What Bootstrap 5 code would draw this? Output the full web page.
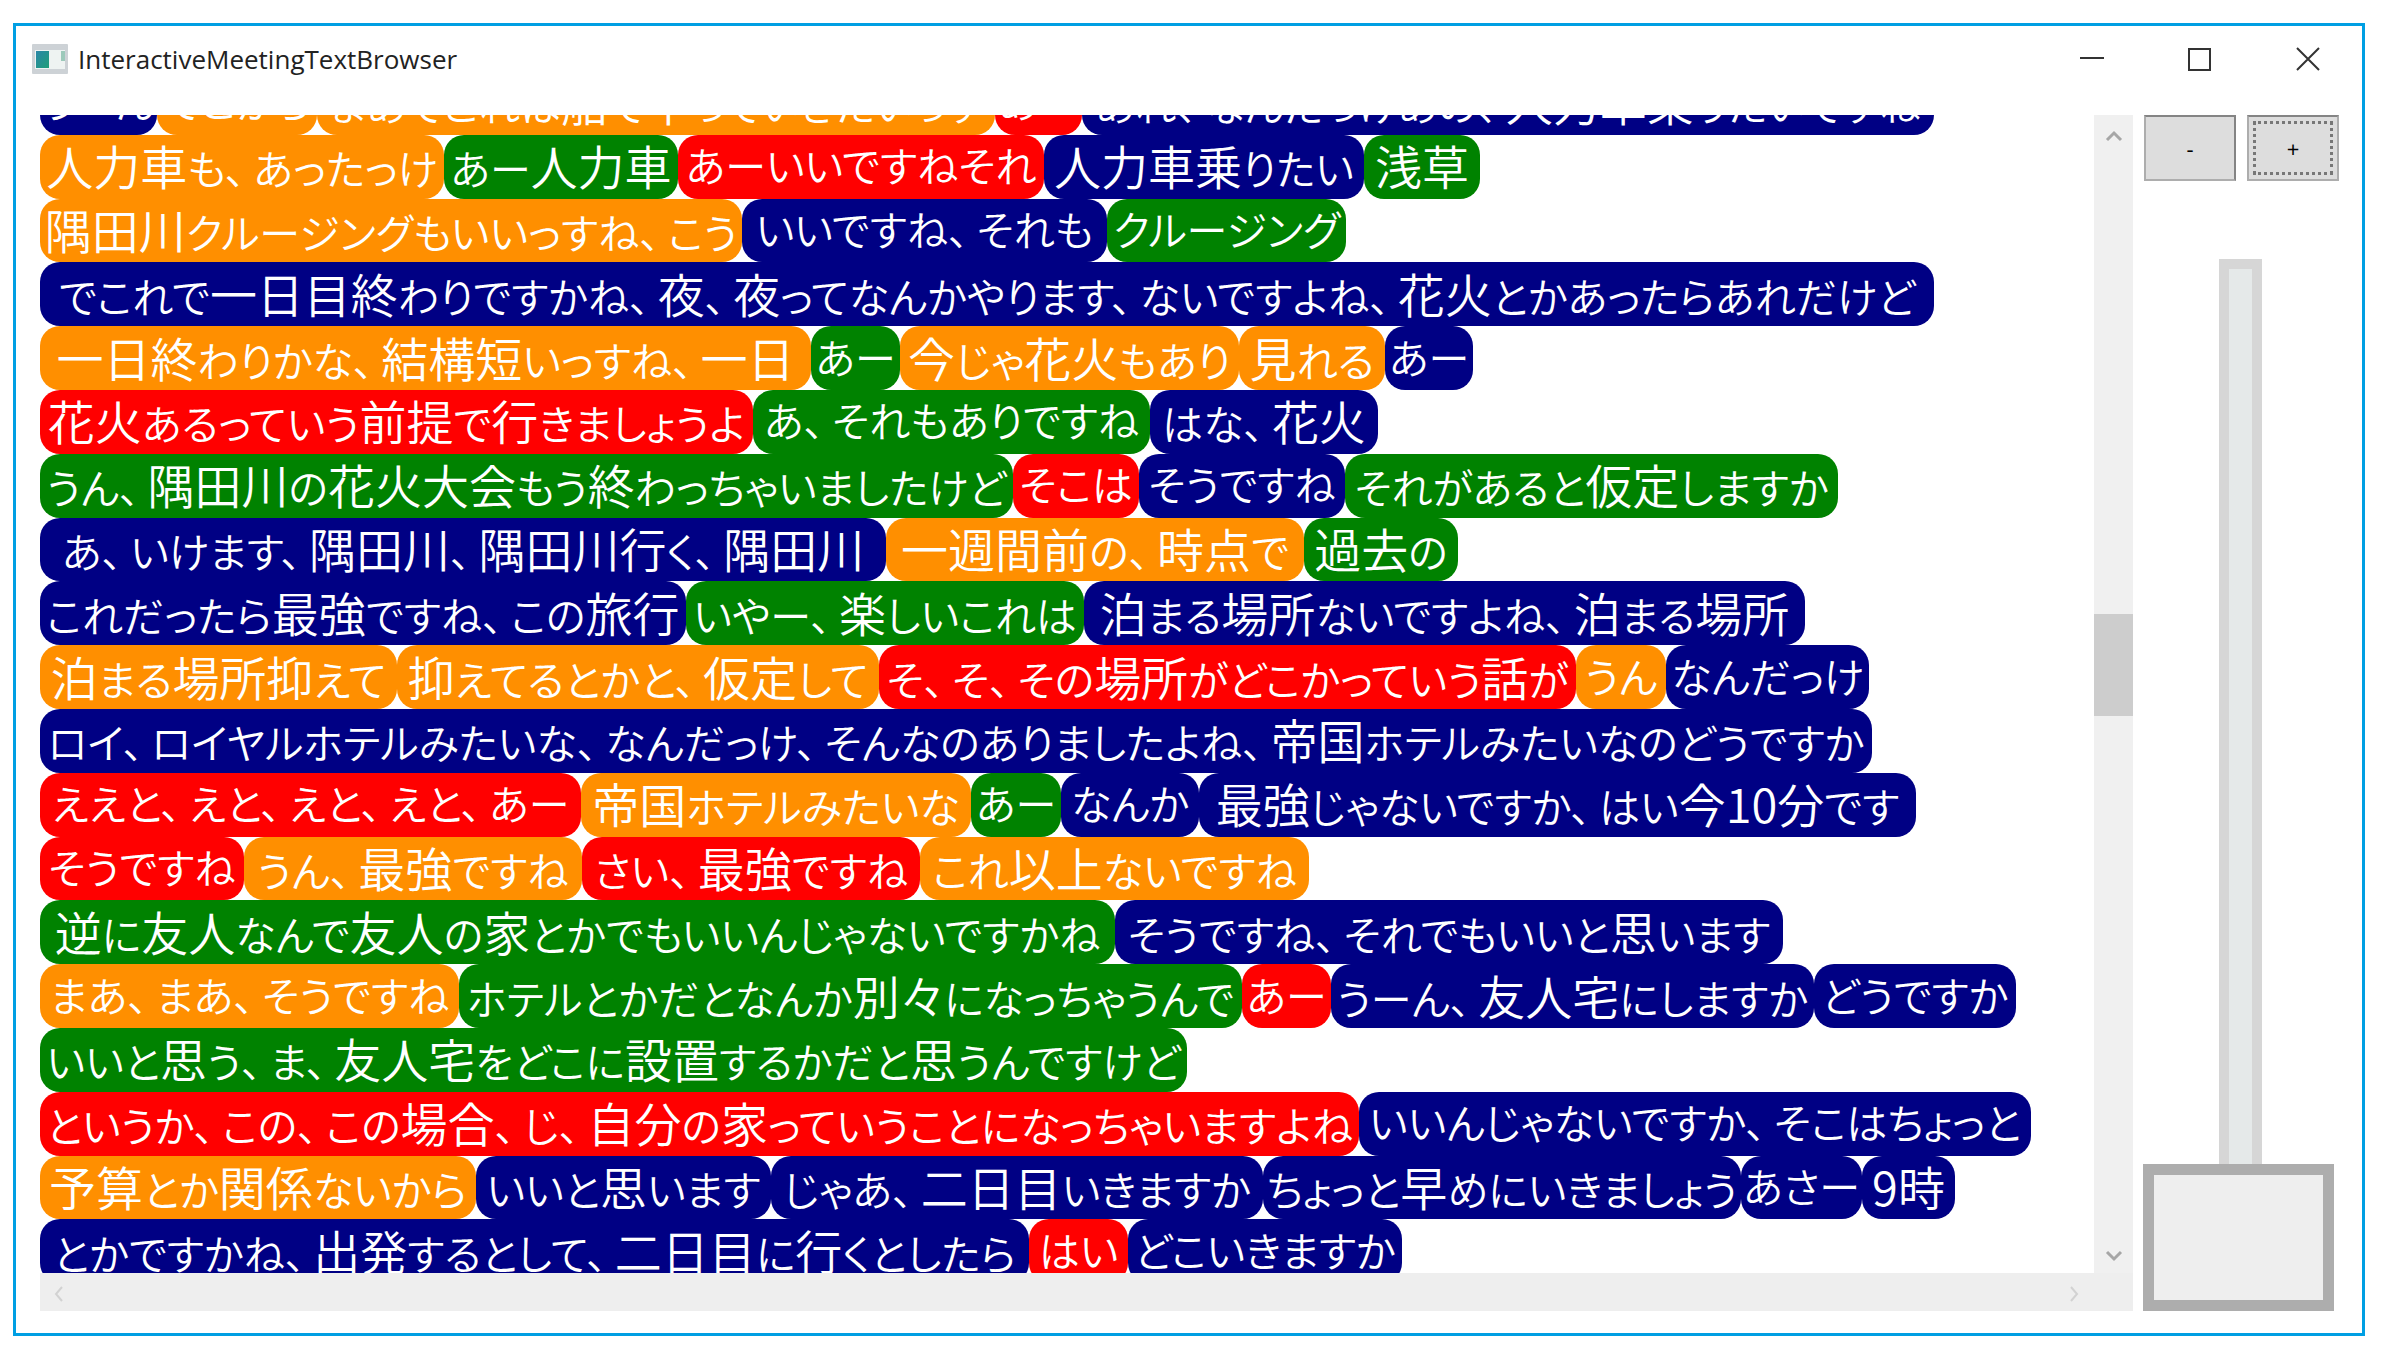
<!DOCTYPE html>
<html lang="ja">
<head>
<meta charset="utf-8">
<meta name="viewport" content="width=device-width, initial-scale=1">
<title>InteractiveMeetingTextBrowser</title>
<link href="https://cdn.jsdelivr.net/npm/bootstrap@5.3.0/dist/css/bootstrap.min.css" rel="stylesheet">
<style>
  body { background: #fff; font-family: "Open Sans", "Noto Sans CJK JP", sans-serif; }
  .app-page { padding: 23px 27px 24px 13px; }
  .app-window { border: 3px solid #009fe3; }
  .title-bar { height: 65px; padding-left: 16px; color: #222; }
  .app-name { font-size: 26px; line-height: 32px; font-weight: 400; margin: 0 0 0 10px; }
  .win-btn { width: 108px; border: 0; background: none; padding: 0; color: #333; }
  .app-main { padding: 24px 23px 22px 24px; gap: 11px; }

  /* transcript */
  .transcript { margin: -44px 0 -10px; }
  .talk-line { flex: 1 1 0; min-height: 0; }
  .talk { border-radius: 20px; color: #fff; white-space: nowrap; line-height: 1; padding-bottom: 4px;
    font-family: "Noto Sans CJK JP", sans-serif; font-size: 41px; font-weight: 350;
    font-feature-settings: "palt"; }
  .talk b { font-size: 47px; font-weight: 350; }
  .talk i { font-style: normal; margin-right: 8px; }
  .talk-a { background: #ff8f00; }
  .talk-b { background: #000084; }
  .talk-c { background: #008200; }
  .talk-d { background: #ff0000; }

  /* scroll bars */
  .bar-v { width: 39px; background: #f0f0f0; }
  .bar-h { height: 38px; background: #eee; padding-right: 40px; }
  .bar-btn { border: 0; background: none; padding: 0; width: 38px; height: 38px; color: #a6a6a6; }
  .bar-h .bar-btn { color: #d2d2d2; }
  .bar-before { flex: 461 0 0; }
  .bar-thumb { flex: 102 0 0; background: #cdcdcd; }
  .bar-after { flex: 519 0 0; }

  /* zoom panel */
  .side-panel { width: 195px; }
  .zoom-row { gap: 11px; }
  .zoom-btn { height: 66px; border: 2px solid #adadad; border-top-color: #848484; background: #ddd;
    color: #000; font-size: 22px; line-height: 1; padding: 4px; }
  .zoom-out { border-right-color: #848484; }
  .focus-box { border: 3px dotted #777; }
  .zoom-range { -webkit-appearance: none; appearance: none; writing-mode: vertical-lr; direction: rtl;
    width: 191px; margin: 78px 0 0; background: none; flex: 1 1 0; min-height: 0; }
  .zoom-range::-webkit-slider-runnable-track { -webkit-appearance: none; width: 43px; height: 100%;
    background: #e5e9e9; border: 10px solid #d6d6d6; box-sizing: border-box; margin-left: 2px; }
  .zoom-range::-webkit-slider-thumb { -webkit-appearance: none; box-sizing: border-box; width: 191px; height: 147px;
    margin: 0 0 -10px -86px; background: #eee; border: 11px solid #adadad; border-radius: 0; }
</style>
</head>
<body>
<div class="app-page vh-100 d-flex">
  <div class="app-window flex-grow-1 d-flex flex-column overflow-hidden">
    <header class="title-bar d-flex align-items-center flex-shrink-0">
      <svg width="36" height="30" viewBox="0 0 36 30" aria-hidden="true">
        <defs><linearGradient id="pane" x1="0" y1="0" x2="1" y2="1"><stop offset="0" stop-color="#2b86a8"/><stop offset="1" stop-color="#1f9f78"/></linearGradient></defs>
        <rect width="36" height="30" rx="1" fill="#cdd2d6"/>
        <rect x="3" y="6" width="30" height="19" fill="#eef3f2"/>
        <rect x="4" y="7" width="13" height="17" fill="url(#pane)"/>
        <rect x="29" y="7" width="4" height="10" fill="#9cc9ba"/>
      </svg>
      <h1 class="app-name">InteractiveMeetingTextBrowser</h1>
      <div class="ms-auto d-flex h-100">
        <button class="win-btn" aria-label="Minimize"><svg width="26" height="26" viewBox="0 0 26 26"><path d="M1 12h24" stroke="currentColor" stroke-width="2"/></svg></button>
        <button class="win-btn" aria-label="Maximize"><svg width="26" height="26" viewBox="0 0 26 26"><rect x="2" y="3" width="21" height="21" fill="none" stroke="currentColor" stroke-width="2"/></svg></button>
        <button class="win-btn" aria-label="Close"><svg width="26" height="26" viewBox="0 0 26 26"><path d="M2 2l22 22M24 2L2 24" stroke="currentColor" stroke-width="2"/></svg></button>
      </div>
    </header>

    <main class="app-main d-flex flex-grow-1 overflow-hidden">
      <section class="flex-grow-1 d-flex flex-column overflow-hidden">
        <div class="d-flex flex-grow-1 overflow-hidden">
          <div class="flex-grow-1 d-flex flex-column overflow-hidden">
            <div id="transcript" class="transcript d-flex flex-column flex-grow-1"></div>
          </div>
          <div class="bar-v d-flex flex-column align-items-center">
            <button class="bar-btn" aria-label="Scroll up"><svg width="18" height="12" viewBox="0 0 18 12"><path d="M2 10l7-7 7 7" fill="none" stroke="currentColor" stroke-width="3"/></svg></button>
            <div class="bar-before"></div>
            <div class="bar-thumb w-100"></div>
            <div class="bar-after"></div>
            <button class="bar-btn" aria-label="Scroll down"><svg width="18" height="12" viewBox="0 0 18 12"><path d="M2 2l7 7 7-7" fill="none" stroke="currentColor" stroke-width="3"/></svg></button>
          </div>
        </div>
        <div class="bar-h d-flex justify-content-between flex-shrink-0">
          <button class="bar-btn" aria-label="Scroll left"><svg width="12" height="18" viewBox="0 0 12 18"><path d="M9 2L3 9l6 7" fill="none" stroke="currentColor" stroke-width="2"/></svg></button>
          <button class="bar-btn" aria-label="Scroll right"><svg width="12" height="18" viewBox="0 0 12 18"><path d="M3 2l6 7-6 7" fill="none" stroke="currentColor" stroke-width="2"/></svg></button>
        </div>
      </section>

      <aside class="side-panel d-flex flex-column flex-shrink-0">
        <div class="zoom-row d-flex">
          <button class="zoom-btn zoom-out flex-fill w-50">-</button>
          <button class="zoom-btn flex-fill w-50"><span class="focus-box d-flex h-100 align-items-center justify-content-center">+</span></button>
        </div>
        <input class="zoom-range" type="range" min="0" max="100" value="0" aria-label="Zoom">
      </aside>
    </main>
  </div>
</div>

<script src="https://cdn.jsdelivr.net/npm/bootstrap@5.3.0/dist/js/bootstrap.bundle.min.js"></script>
<script>
  // One entry per line; each utterance is [speaker, text, end position on the line].
  const lines = [
    [["b","うーん",117],["a","でこから",277],["a","まあでこれは船で下っていきたいっす",955],["d","あー",1042],["b","あれ、なんだっけあの、人力車乗りたいですね",1894]],
    [["a","人力車も、あったっけ",404],["c","あー人力車",638],["d","あーいいですねそれ",1004],["b","人力車乗りたい",1324],["c","浅草",1440]],
    [["a","隅田川クルージングもいいっすね、こう",702],["b","いいですね、それも",1067],["c","クルージング",1306]],
    [["b","でこれで一日目終わりですかね、夜、夜ってなんかやります、ないですよね、花火とかあったらあれだけど",1894]],
    [["a","一日終わりかな、結構短いっすね、一日",771],["c","あー",860],["a","今じゃ花火もあり",1199],["a","見れる",1345],["b","あー",1433]],
    [["d","花火あるっていう前提で行きましょうよ",713],["c","あ、それもありですね",1110],["b","はな、花火",1338]],
    [["c","うん、隅田川の花火大会もう終わっちゃいましたけど",973],["d","そこは",1099],["b","そうですね",1305],["c","それがあると仮定しますか",1798]],
    [["b","あ、いけます、隅田川、隅田川行く、隅田川",846],["a","一週間前の、時点で",1264],["c","過去の",1418]],
    [["b","これだったら最強ですね、この旅行",646],["c","いやー、楽しいこれは",1044],["b","泊まる場所ないですよね、泊まる場所",1765]],
    [["a","泊まる場所抑えて",357],["a","抑えてるとかと、仮定して",839],["d","そ、そ、その場所がどこかっていう話が",1536],["a","うん",1626],["b","なんだっけ",1829]],
    [["b","ロイ、ロイヤルホテルみたいな、なんだっけ、そんなのありましたよね、帝国ホテルみたいなのどうですか",1832]],
    [["d","ええと、えと、えと、えと、あー",541],["a","帝国ホテルみたいな",931],["c","あー",1021],["b","なんか",1159],["b","最強じゃないですか、はい今10分です",1876]],
    [["d","そうですね",204],["a","うん、最強ですね",542],["d","さい、最強ですね",880],["a","これ以上ないですね",1269]],
    [["c","逆に友人なんで友人の家とかでもいいんじゃないですかね",1075],["b","そうですね、それでもいいと思います",1743]],
    [["a","まあ、まあ、そうですね",419],["c","ホテルとかだとなんか別々になっちゃうんで",1202],["d","あー",1291],["b","うーん、友人宅にしますか",1774],["b","どうですか",1976]],
    [["c","いいと思う、ま、友人宅をどこに設置するかだと思うんですけど",1147]],
    [["d","というか、この、この場合、じ、自分の家っていうことになっちゃいますよね",1319],["b","いいんじゃないですか、そこはちょっと",1991]],
    [["a","予算とか関係ないから",436],["b","いいと思います",731],["b","じゃあ、二日目いきますか",1223],["b","ちょっと早めにいきましょう",1701],["b","あさー",1822],["b","9時",1915]],
    [["b","とかですかね、出発するとして、二日目に行くとしたら",989],["d","はい",1088],["b","どこいきますか",1362]]
  ];
  // Kanji are set larger than kana; a comma is followed by a short pause.
  const typeset = t => t.replace(/[\u4e00-\u9fff々0-9]+/g, "<b>$&</b>").replace(/、(?!$)/g, "<i>、</i>");
  document.getElementById("transcript").innerHTML = lines.map(line => {
    let start = 0;
    return '<div class="talk-line d-flex">' + line.map(([who, text, end]) => {
      const width = end - start;
      start = end;
      return `<div class="talk talk-${who} d-flex align-items-center justify-content-center flex-shrink-0" style="width:${width}px"><span>${typeset(text)}</span></div>`;
    }).join("") + "</div>";
  }).join("");
</script>
</body>
</html>
